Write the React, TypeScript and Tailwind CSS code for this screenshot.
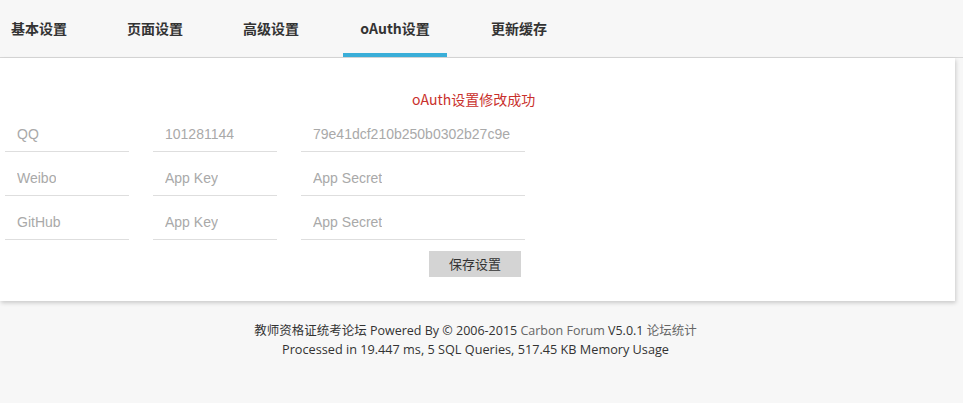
import React from "react";

const tabs = ["基本设置", "页面设置", "高级设置", "oAuth设置", "更新缓存"];

const rows = [
  ["QQ", "101281144", "79e41dcf210b250b0302b27c9e"],
  ["Weibo", "App Key", "App Secret"],
  ["GitHub", "App Key", "App Secret"],
];

export default function App() {
  return (
    <div className="w-[963px] h-[403px] bg-[#f7f7f7] overflow-hidden" style={{ fontFamily: '"Liberation Sans", "Noto Sans CJK SC", sans-serif' }}>
      <div className="h-[58px] border-b border-[#d8d8d8] flex items-end -ml-[5px] gap-[28px]">
        {tabs.map((t, i) => (
          <div
            key={t}
            className={
              "h-full flex items-center justify-center text-[14px] font-bold text-[#333] border-b-4 " +
              (i === 3 ? "w-[104px] border-[#3aaed8]" : "w-[88px] border-transparent")
            }
            style={{ fontFamily: '"Noto Sans CJK SC", sans-serif' }}
          >
            <span className="pt-[4px] whitespace-nowrap">{t}</span>
          </div>
        ))}
      </div>
      <div className="w-[955px] h-[243px] bg-white shadow-[1px_2px_4px_rgba(0,0,0,0.18)] pt-[30px]">
        <div className="pl-[412px] text-[14px] text-[#c9302c] h-[22px] leading-[22px]" style={{ fontFamily: '"Noto Sans CJK SC", sans-serif' }}>
          oAuth设置修改成功
        </div>
        <div className="pt-[7px] pl-[5px]">
          {rows.map((r, i) => (
            <div key={i} className={"flex gap-[24px] " + (i > 0 ? "mt-[9px]" : "")}>
              {r.map((c, j) => (
                <div
                  key={j}
                  className={
                    "h-[35px] border-b border-[#dedede] pl-3 pt-[1px] flex items-center text-[14px] text-[#a9a9a9] overflow-hidden whitespace-nowrap " +
                    (j === 2 ? "w-[224px] pr-[12px]" : "w-[124px]")
                  }
                >
                  <span className="overflow-hidden">{c}</span>
                </div>
              ))}
            </div>
          ))}
          <div className="flex mt-[11px] pl-[424px]">
            <div className="w-[92px] h-[26px] bg-[#d4d4d4] flex items-center justify-center text-[13px] text-[#333]" style={{ fontFamily: '"Noto Sans CJK SC", sans-serif' }}>
              保存设置
            </div>
          </div>
        </div>
      </div>
      <div className="pt-[20px] text-center text-[12.5px] leading-[19px] text-[#333] pr-[12px]" style={{ fontFamily: '"Open Sans", "Noto Sans CJK SC", sans-serif' }}>
        <div>
          教师资格证统考论坛 Powered By © 2006-2015 <span className="text-[#666]">Carbon Forum</span> V5.0.1 <span className="text-[#666]">论坛统计</span>
        </div>
        <div className="text-[12.7px]">Processed in 19.447 ms, 5 SQL Queries, 517.45 KB Memory Usage</div>
      </div>
    </div>
  );
}
